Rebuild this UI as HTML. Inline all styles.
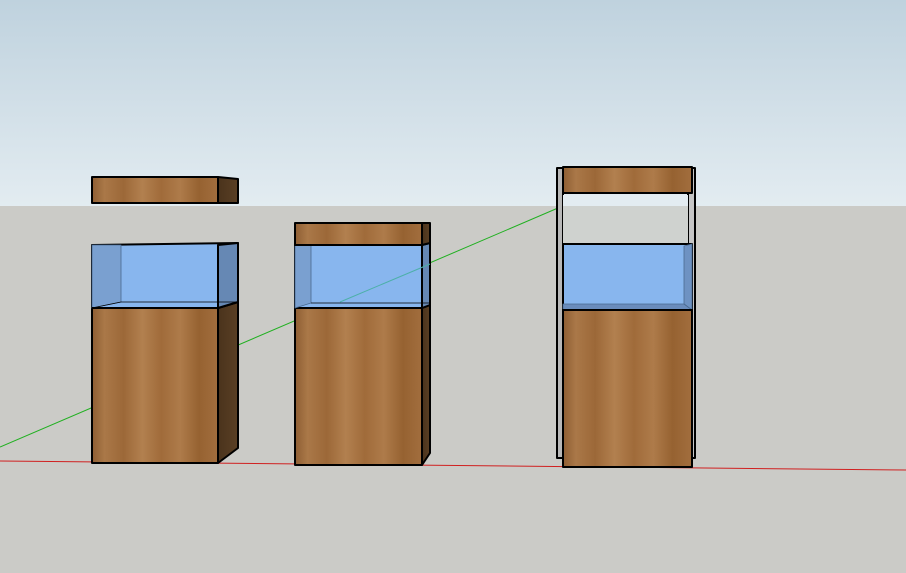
<!DOCTYPE html>
<html><head><meta charset="utf-8"><style>html,body{margin:0;padding:0;overflow:hidden}svg{display:block}</style></head><body>
<svg width="906" height="573" viewBox="0 0 906 573" xmlns="http://www.w3.org/2000/svg">
<defs>
<linearGradient id="sky" x1="0" y1="0" x2="0" y2="1"><stop offset="0" stop-color="#bfd2de"/><stop offset="1" stop-color="#e3ecf1"/></linearGradient>
<linearGradient id="wood" x1="0" y1="0" x2="1" y2="0">
<stop offset="0" stop-color="#8e5e33"/><stop offset="0.1" stop-color="#aa7848"/><stop offset="0.25" stop-color="#9c6838"/><stop offset="0.4" stop-color="#b2804f"/><stop offset="0.55" stop-color="#a06b3a"/><stop offset="0.7" stop-color="#ae7b4a"/><stop offset="0.85" stop-color="#966231"/><stop offset="1" stop-color="#a26e3e"/></linearGradient>
<linearGradient id="dark" x1="0" y1="0" x2="1" y2="0"><stop offset="0" stop-color="#4a331c"/><stop offset="1" stop-color="#5a3f24"/></linearGradient>
</defs>
<rect width="906" height="207" fill="url(#sky)"/>
<rect y="206" width="906" height="367" fill="#cbcbc7"/>
<line x1="0" y1="461" x2="906" y2="470" stroke="#d02020" stroke-width="1"/>
<line x1="0" y1="447" x2="565" y2="205" stroke="#20b020" stroke-width="1"/>
<g stroke="#000" stroke-width="2" stroke-linejoin="round">
<rect x="92" y="177" width="126" height="26" fill="url(#wood)"/>
<polygon points="218,177 238,179 238,203 218,203" fill="url(#dark)"/>
<rect x="92" y="308" width="126" height="155" fill="url(#wood)"/>
<polygon points="218,308 238,302 238,448 218,463" fill="url(#dark)"/>
<polygon points="92,245 238,243 238,302 218,308 92,308" fill="#88b6ee"/>
<polygon points="92,245 121,245 121,302 92,308" fill="#7aa0d0" stroke-width="0.8" stroke="#4a6a90"/>
<polygon points="218,245 238,243 238,302 218,308" fill="#6688b4"/>
<line x1="92" y1="308" x2="121" y2="302" stroke-width="0.8"/>
<line x1="121" y1="302" x2="238" y2="302" stroke-width="0.8"/>
<line x1="92" y1="308" x2="218" y2="308"/>
<rect x="295" y="308" width="127" height="157" fill="url(#wood)"/>
<polygon points="422,308 430,305 430,453 422,465" fill="url(#dark)"/>
<polygon points="295,245 430,243 430,305 422,308 295,308" fill="#88b6ee"/>
<polygon points="295,245 311,245 311,303 295,308" fill="#7aa0d0" stroke-width="0.8" stroke="#4a6a90"/>
<polygon points="422,245 430,243 430,305 422,308" fill="#6688b4"/>
<line x1="311" y1="303" x2="430" y2="303" stroke-width="0.8"/>
<line x1="340" y1="302" x2="430" y2="264" stroke="#4cb0a8" stroke-width="1"/>
<rect x="295" y="223" width="127" height="22" fill="url(#wood)"/>
<polygon points="422,223 430,223 430,243 422,245" fill="url(#dark)"/>
<rect x="557" y="168" width="6" height="290" fill="#b8b8b8"/>
<rect x="688" y="168" width="7" height="290" fill="#c6c6c6"/>
<rect x="563" y="195" width="125" height="48" fill="#cfd2cf" stroke="none"/>
<rect x="563" y="195" width="125" height="11" fill="#e3ecf1" stroke="none"/>
<rect x="563" y="167" width="129" height="26" fill="url(#wood)"/>
<rect x="563" y="244" width="129" height="66" fill="#88b6ee"/>
<polygon points="684,246 692,244 692,310 684,304" fill="#6e92c2" stroke-width="0.8" stroke="#4a6a90"/>
<polygon points="563,304 684,304 692,310 563,310" fill="#6a8cbc" stroke-width="0.8" stroke="#4a6a90"/>
<rect x="563" y="310" width="129" height="157" fill="url(#wood)"/>
</g>
</svg>
</body></html>
